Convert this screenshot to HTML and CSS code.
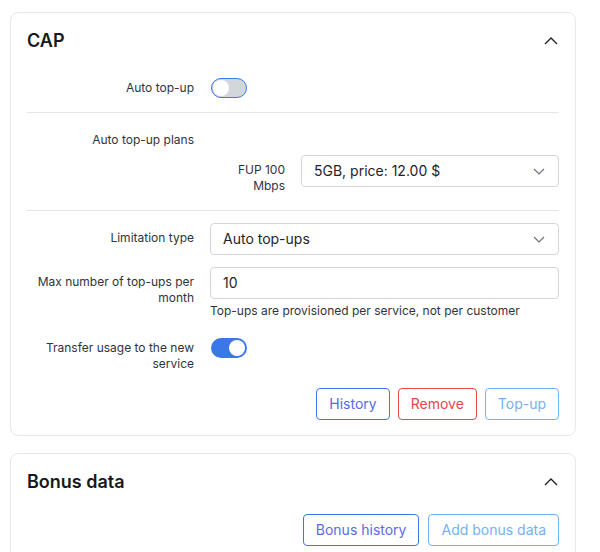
FILE: index.html
```html
<!DOCTYPE html>
<html>
<head>
<meta charset="utf-8">
<link rel="stylesheet" href="styles.css">
</head>
<body>
<div class="page">
  <section class="card">
    <div class="card-header">
      <h2 class="card-title">CAP</h2>
      <svg class="chev-up" width="14" height="8" viewBox="0 0 14 8"><path d="M1 7 L7 1 L13 7" fill="none" stroke="#1f2328" stroke-width="1.4"/></svg>
    </div>

    <div class="row row-toggle first-row">
      <div class="label label-toggle">Auto top-up</div>
      <div class="control"><span class="switch off"><span class="knob"></span></span></div>
    </div>

    <hr class="sep sep1">

    <div class="row plans-title">
      <div class="label">Auto top-up plans</div>
    </div>

    <div class="plans-row">
      <div class="nested">
        <div class="nested-label">FUP 100 Mbps</div>
        <div class="select nested-select"><span>5GB, price: 12.00 $</span><svg class="chev-down" width="12" height="7" viewBox="0 0 12 7"><path d="M1 1 L6 6 L11 1" fill="none" stroke="#6b7280" stroke-width="1.2"/></svg></div>
      </div>
    </div>

    <hr class="sep sep2">

    <div class="row limit-row">
      <div class="label">Limitation type</div>
      <div class="control"><div class="select"><span>Auto top-ups</span><svg class="chev-down" width="12" height="7" viewBox="0 0 12 7"><path d="M1 1 L6 6 L11 1" fill="none" stroke="#6b7280" stroke-width="1.2"/></svg></div></div>
    </div>

    <div class="row max-row">
      <div class="label">Max number of top-ups per month</div>
      <div class="control">
        <div class="input">10</div>
        <div class="help">Top-ups are provisioned per service, not per customer</div>
      </div>
    </div>

    <div class="row row-toggle transfer-row">
      <div class="label label-toggle">Transfer usage to the new service</div>
      <div class="control"><span class="switch on"><span class="knob"></span></span></div>
    </div>

    <div class="actions">
      <button class="btn btn-primary">History</button>
      <button class="btn btn-danger">Remove</button>
      <button class="btn btn-light">Top-up</button>
    </div>
  </section>

  <section class="card card2">
    <div class="card-header">
      <h2 class="card-title">Bonus data</h2>
      <svg class="chev-up" width="14" height="8" viewBox="0 0 14 8"><path d="M1 7 L7 1 L13 7" fill="none" stroke="#1f2328" stroke-width="1.4"/></svg>
    </div>
    <div class="actions actions2">
      <button class="btn btn-primary">Bonus history</button>
      <button class="btn btn-light">Add bonus data</button>
    </div>
  </section>
</div>
</body>
</html>
```

FILE: styles.css
```css
* { box-sizing: border-box; }
html, body { margin: 0; padding: 0; background: #fff; }
body {
  font-family: Inter, "Noto Sans", "Liberation Sans", sans-serif;
  color: #1f2328;
}
.page { padding: 12px 24px 0 10px; }

.card {
  width: 566px;
  border: 1px solid #e6e8eb;
  border-radius: 8px;
  background: #fff;
  padding: 15px 16px 15px 16px;
}
.card2 { margin-top: 17px; padding-bottom: 16px; }

.card-header {
  display: flex;
  align-items: center;
  justify-content: space-between;
  height: 26px;
  margin-bottom: 24px;
}
.card2 .card-header { margin-bottom: 19px; }
.card-title {
  margin: 0;
  font-size: 18px;
  line-height: 26px;
  font-weight: 600;
  color: #16191d;
}
.chev-up { margin-right: 1px; }

.row {
  display: flex;
  align-items: flex-start;
  gap: 16px;
}
.label {
  width: 167px;
  flex: none;
  text-align: right;
  font-size: 12px;
  line-height: 16px;
  color: #30343a;
  padding-top: 7px;
}
.label-toggle { padding-top: 2px; }
.control { flex: 1; min-width: 0; }

.switch {
  display: block;
  width: 36px;
  height: 20px;
  margin-left: 1px;
  border-radius: 10px;
  position: relative;
}
.switch.off { background: #d3d6db; border: 1px solid #3b7ae8; }
.switch.on { background: #3a78e8; }
.knob {
  position: absolute;
  top: 2px;
  width: 16px;
  height: 16px;
  border-radius: 50%;
  background: #fff;
}
.switch.off .knob { top: 1px; left: 1px; }
.switch.on .knob { right: 2px; }

.sep {
  border: 0;
  border-top: 1px solid #e4e6e9;
  margin: 0;
}
.sep1 { margin-top: 14px; margin-bottom: 19px; }
.sep2 { margin-top: 16px; margin-bottom: 12px; }

.plans-title .label { padding-top: 0; }
.plans-row { margin-top: 7px; }
.nested { margin-left: 183px; display: flex; gap: 16px; align-items: flex-start; }
.nested-label {
  width: 75px;
  flex: none;
  text-align: right;
  font-size: 12px;
  line-height: 16px;
  color: #30343a;
  padding: 7px 0 0 10px;
}
.nested-select { flex: 1; }

.select, .input {
  height: 32px;
  border: 1px solid #d3d7dc;
  border-radius: 4px;
  background: #fff;
  font-size: 14px;
  line-height: 30px;
  color: #1f2328;
  padding: 0 12px;
}
.select {
  display: flex;
  align-items: center;
  justify-content: space-between;
}
.chev-down { margin-right: 1px; }

.max-row { margin-top: 12px; }
.help {
  margin-top: 4px;
  font-size: 12px;
  line-height: 16px;
  color: #30343a;
}
.transfer-row { margin-top: 19px; }

.actions {
  display: flex;
  justify-content: flex-end;
  gap: 8px;
  margin-top: 16px;
}
.actions2 { margin-top: 0; gap: 9px; }
.btn {
  height: 32px;
  padding: 0 12px;
  border-radius: 4px;
  background: #fff;
  font-family: inherit;
  font-size: 14px;
  line-height: 30px;
  border: 1px solid;
  cursor: pointer;
}
.btn-primary { border-color: #3b78e6; color: #5a6ae6; }
.btn-danger { border-color: #e5484d; color: #e5484d; }
.btn-light { border-color: #6db3f8; color: #72b2f4; }
```
